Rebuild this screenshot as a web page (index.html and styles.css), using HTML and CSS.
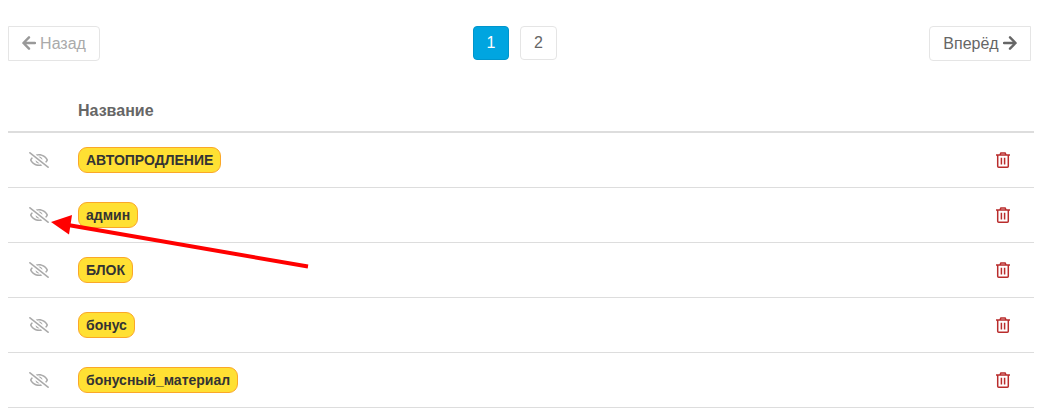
FILE: index.html
```
<!DOCTYPE html>
<html lang="ru">
<head>
    <meta charset="UTF-8">
    <meta name="viewport" content="width=device-width, initial-scale=1.0">
    <title>Теги</title>
    <link rel="stylesheet" href="styles.css">
</head>
<body>

<svg class="sprite">
    <symbol id="eye-off" viewBox="0 0 640 512">
        <path d="M634 471L36 3.510A16 16 0 0 0 13.510 6l-10 12.490A16 16 0 0 0 6 41l598 467.490a16 16 0 0 0 22.490-2.490l10-12.490A16 16 0 0 0 634 471zM296.790 146.470l134.790 105.380C429.360 191.910 380.480 144 320 144a112.260 112.260 0 0 0-23.210 2.470zm46.420 219.070L208.420 260.160C210.650 320.090 259.530 368 320 368a113 113 0 0 0 23.210-2.460zM320 112c98.650 0 189.090 55 237.930 144a285.530 285.530 0 0 1-44 60.200l37.740 29.500a333.700 333.700 0 0 0 52.900-75.110 32.350 32.350 0 0 0 0-29.190C550.290 135.590 442.930 64 320 64c-36.700 0-71.710 7-104.630 18.810l46.410 36.290c18.940-4.300 38.340-7.100 58.220-7.100zm0 288c-98.650 0-189.080-55-237.930-144a285.470 285.470 0 0 1 44.050-60.190l-37.740-29.500a333.600 333.600 0 0 0-52.890 75.100 32.350 32.350 0 0 0 0 29.190C89.720 376.410 197.080 448 320 448c36.700 0 71.710-7.050 104.630-18.810l-46.410-36.280C359.280 397.200 339.890 400 320 400z"/>
    </symbol>
    <symbol id="trash" viewBox="0 0 14 16">
        <path d="M0 3h14M4 2.800l.9-1.900h4.200l.9 1.900M1.700 3v11.200c0 .6.400 1 1 1h8.600c.6 0 1-.4 1-1V3M5.400 5.700v6.800M8.600 5.700v6.800"/>
    </symbol>
</svg>

<div class="pager">
    <a class="btn btn-prev disabled">
        <svg class="arrow" viewBox="0 0 14 14"><path d="M7 1.300L1.400 7 7 12.700M1.600 7H13"/></svg>
        <span>Назад</span>
    </a>
    <div class="pages">
        <a class="page active">1</a>
        <a class="page">2</a>
    </div>
    <a class="btn btn-next">
        <span>Вперёд</span>
        <svg class="arrow" viewBox="0 0 14 14"><path d="M7 1.300L12.600 7 7 12.700M12.400 7H1"/></svg>
    </a>
</div>

<table class="tags">
    <thead>
        <tr><th class="col-eye"></th><th>Название</th><th class="col-del"></th></tr>
    </thead>
    <tbody>
        <tr>
            <td><svg class="eye"><use href="#eye-off"/></svg></td>
            <td><span class="tag">АВТОПРОДЛЕНИЕ</span></td>
            <td><svg class="trash"><use href="#trash"/></svg></td>
        </tr>
        <tr>
            <td><svg class="eye"><use href="#eye-off"/></svg></td>
            <td><span class="tag">админ</span></td>
            <td><svg class="trash"><use href="#trash"/></svg></td>
        </tr>
        <tr>
            <td><svg class="eye"><use href="#eye-off"/></svg></td>
            <td><span class="tag">БЛОК</span></td>
            <td><svg class="trash"><use href="#trash"/></svg></td>
        </tr>
        <tr>
            <td><svg class="eye"><use href="#eye-off"/></svg></td>
            <td><span class="tag">бонус</span></td>
            <td><svg class="trash"><use href="#trash"/></svg></td>
        </tr>
        <tr>
            <td><svg class="eye"><use href="#eye-off"/></svg></td>
            <td><span class="tag">бонусный_материал</span></td>
            <td><svg class="trash"><use href="#trash"/></svg></td>
        </tr>
    </tbody>
</table>

<!-- красная стрелка-указатель поверх таблицы -->
<svg class="pointer" viewBox="0 0 260 60">
    <path class="pointer-line" d="M18 12L258 53.500"/>
    <path class="pointer-head" d="M1 9L22 2 19 21.500z"/>
</svg>

</body>
</html>
```

FILE: styles.css
```
* { box-sizing: border-box; }
body { margin: 0; padding: 26px 12px 0 8px; background: #fff; color: #666; font: 16px/20px "Liberation Sans", Arial, sans-serif; overflow: hidden; }
svg { display: block; fill: none; }
.sprite { display: none; }

.pager { display: flex; justify-content: space-between; align-items: flex-start; height: 64px; padding-right: 3px; }
.btn { display: flex; align-items: center; justify-content: center; gap: 4px; height: 35px; border: 1px solid #e5e5e5; }
.btn-prev { width: 92px; border-radius: 0 4px 4px 0; }
.btn-next { width: 102px; border-radius: 4px 0 0 4px; }
.disabled { color: #aaa; }
.arrow { width: 14px; height: 14px; margin-top: -2px; stroke: currentColor; stroke-width: 2.4; stroke-linecap: round; stroke-linejoin: round; }
.disabled .arrow { stroke: #999; }
.pages { display: flex; gap: 11px; margin-left: 1px; }
.page { width: 37px; height: 34px; line-height: 32px; text-align: center; border: 1px solid #e5e5e5; border-radius: 4px; }
.page.active { width: 36px; background: #00a5e0; border-color: #0095cc; color: #fff; }

.tags { width: 100%; border-collapse: separate; border-spacing: 0; table-layout: fixed; }
.tags th { height: 43px; padding: 0; border-bottom: 2px solid #ddd; text-align: left; font-weight: bold; }
.tags td { height: 55px; padding: 0; border-bottom: 1px solid #ddd; vertical-align: middle; }
.col-eye { width: 70px; }
.col-del { width: 62px; }
.tag { display: block; width: fit-content; height: 26px; padding: 0 7px; border: 1px solid #fba728; border-radius: 9px; background: #ffe033; color: #333; font-size: 14px; font-weight: bold; line-height: 24px; }
.eye { width: 20px; height: 16px; margin-left: 21px; fill: #aaa; }
.trash { width: 14px; height: 16px; margin: 0 0 0 24px; stroke: #b92c2c; stroke-width: 1.5; }

.pointer { position: absolute; left: 50px; top: 213px; width: 260px; height: 60px; }
.pointer-line { stroke: #f00; stroke-width: 4; }
.pointer-head { fill: #f00; }
```
